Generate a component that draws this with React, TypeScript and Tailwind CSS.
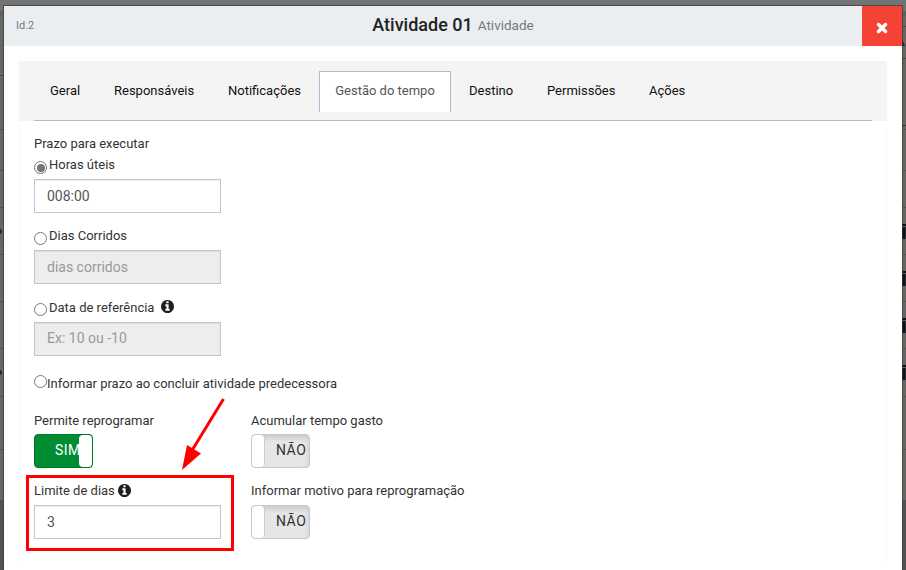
import React from "react";

const tabs = [
  { label: "Geral", cls: "ml-[15px] w-[65px]" },
  { label: "Responsáveis", cls: "w-[114px]" },
  { label: "Notificações", cls: "w-[91px]" },
  { label: "Gestão do tempo", active: true, cls: "w-[132px]" },
  { label: "Destino", cls: "ml-[2px] w-[76px]" },
  { label: "Permissões", cls: "ml-[2px] w-[100px]" },
  { label: "Ações", cls: "ml-[2px] w-[68px]" },
];

const rules = [129, 170, 207, 254, 301, 348, 396, 449];
const actions = [224, 271, 318, 365];

function Info({ className }: { className: string }) {
  return (
    <svg viewBox="0 0 1536 1536" className={className} fill="#1f1f1f">
      <path d="M1024 1248v-160q0-14-9-23t-23-9h-96V544q0-14-9-23t-23-9H544q-14 0-23 9t-9 23v160q0 14 9 23t23 9h96v320h-96q-14 0-23 9t-9 23v160q0 14 9 23t23 9h448q14 0 23-9t9-23zM896 352V192q0-14-9-23t-23-9H672q-14 0-23 9t-9 23v160q0 14 9 23t23 9h192q14 0 23-9t9-23zM1536 768q0 209-103 385.500T1153.500 1433 768 1536 382.500 1433 103 1153.500 0 768 103 382.500 382.500 103 768 0t385.500 103T1433 382.500 1536 768z" />
    </svg>
  );
}

function Radio({ checked = false, className = "" }: { checked?: boolean; className?: string }) {
  return (
    <span className={`flex size-[13px] shrink-0 items-center justify-center rounded-full border border-[#767676] bg-white ${className}`}>
      {checked && <span className="size-[8px] rounded-full bg-[#767676]" />}
    </span>
  );
}

function Field({ value, disabled = false, className = "" }: { value: string; disabled?: boolean; className?: string }) {
  return (
    <div className={`flex h-[34px] w-[187px] items-center border border-[#c6c6c6] px-3 text-[14px] shadow-[inset_0_1px_1px_rgba(0,0,0,0.07)] ${disabled ? "bg-[#ededed] text-[#999]" : "bg-white text-[#555]"} ${className}`}>
      {value}
    </div>
  );
}

function Toggle({ on = false }: { on?: boolean }) {
  return on ? (
    <div className="flex h-[34px] w-[59px] items-center justify-between rounded border border-[#00752a] bg-[#008d31] pl-5 text-[14px] tracking-[0.5px] text-white">
      <span className="-mr-4 pb-[2px] whitespace-nowrap">SIM</span>
      <span className="relative h-[32px] w-[13px] shrink-0 rounded bg-white" />
    </div>
  ) : (
    <div className="flex h-[34px] w-[59px] items-center overflow-hidden rounded border border-[#c8c8c8] bg-[#e6e6e6] text-[14px] tracking-[0.5px] text-[#333] shadow-[inset_0_3px_5px_rgba(0,0,0,0.125)]">
      <span className="h-[32px] w-[13px] shrink-0 rounded border-r border-[#ccc] bg-white" />
      <span className="ml-[11px] pb-[2px]">NÃO</span>
    </div>
  );
}

function Backdrop() {
  return (
    <div className="absolute inset-0 overflow-hidden bg-[#686663]">
      <div className="absolute inset-x-0 top-0 h-[11px] bg-[#737373]" />
      <div className="absolute inset-x-0 top-[11px] h-[5px] bg-[#5f5f5f]" />
      <div className="absolute inset-x-0 top-[500px] bottom-0 bg-[#535250]" />
      <div className="absolute top-[75px] left-0 h-px w-1 bg-[#444]" />
      <div className="absolute top-[26px] right-0 h-px w-1 bg-[#484848]" />
      <div className="absolute top-[58px] right-0 h-px w-1 bg-[#444]" />
      <div className="absolute top-[125px] right-0 h-px w-1 bg-[#333]" />
      {rules.map((y) => (
        <div key={y} className="absolute inset-x-0 h-px bg-[#51504e]" style={{ top: y }} />
      ))}
      <div className="absolute top-[229px] -left-[3px] size-[5px] rounded-full bg-[#24204a]" />
      <div className="absolute top-[370px] -left-[3px] size-[5px] rounded-full bg-[#24204a]" />
      <svg className="absolute top-[39px] left-[902px] h-[7px] w-1" viewBox="0 0 4 7"><path d="M0 0 3 7H1L0 5Z" fill="#17242c" /></svg>
      {actions.map((y) => (
        <div key={y} className="absolute right-0 flex w-1 flex-col gap-px" style={{ top: y }}>
          <div className="h-[2px] bg-[#111]" />
          <div className="flex h-[12px]">
            <div className="w-[3px] bg-[#111]" />
            <div className="w-px bg-[#263340]" />
          </div>
        </div>
      ))}
    </div>
  );
}

export default function App() {
  return (
    <div className="relative flex h-[570px] w-[906px] overflow-hidden pt-[6px] pl-1 font-[Roboto,sans-serif] text-[13px] text-[#333]">
      <Backdrop />
      <main className="relative h-[564px] w-[898px] bg-white shadow-[0_0_0_1px_rgba(60,60,60,0.7)]">
        <header className="flex h-10 bg-[#eaeef1]">
          <span className="w-[120px] pt-[12px] pl-3 text-[11px] leading-[16px] text-[#777]">Id.2</span>
          <h1 className="flex flex-1 justify-center pt-[6px] text-[18px] leading-[26px] font-medium whitespace-pre text-[#222]">
            <span>Atividade 01</span>
            <small className="ml-[5px] text-[13.500px] font-normal text-[#777]">Atividade</small>
          </h1>
          <span className="w-[80px]" />
          <button className="flex w-10 items-center justify-center bg-[#f44336] pt-[3px]">
            <svg viewBox="0 0 12 12" className="size-3"><path d="M2.500 2.500 9.500 9.500M9.500 2.500 2.500 9.500" stroke="white" strokeWidth="3.500" strokeLinecap="round" /></svg>
          </button>
        </header>
        <div className="px-[15px] pt-[15px]">
          <nav className="h-[60px] bg-[#f4f4f4] px-[15px] pt-[10px]">
            <div className="-mt-px flex h-[51px] border-b border-[#a9bfd1] pt-px">
              {tabs.map((t, i) => (
                <div key={t.label} className={`flex h-[41px] shrink-0 items-center whitespace-nowrap ${t.active ? "justify-center border border-b-0 border-[#a9bfd1] bg-white pb-[3px] text-[#555]" : "pb-[2px] text-[#111]"} ${i > 3 ? "pl-4" : ""} ${i === 0 ? "pl-px" : ""} ${t.cls}`}>
                  {t.label}
                </div>
              ))}
            </div>
          </nav>
          <section className="h-[443px] border-x border-[#fafafa] px-[14px] pt-[13px] leading-5">
            <div className="h-[21px]">Prazo para executar</div>
            <div className="flex h-[24px]"><Radio checked className="mt-[6px]" /><span className="ml-[2px]">Horas úteis</span></div>
            <Field value="008:00" />
            <div className="flex h-[37px] pt-[13px]"><Radio className="mt-[6px]" /><span className="ml-[2px]">Dias Corridos</span></div>
            <Field value="dias corridos" disabled />
            <div className="flex h-[38px] pt-[14px]"><Radio className="mt-[5px]" /><span className="ml-[2px]">Data de referência</span><Info className="mt-[2px] ml-[7px] size-[13px]" /></div>
            <Field value="Ex: 10 ou -10" disabled className="pb-[2px]" />
            <div className="flex h-[55px] pt-[18px]"><Radio className="mt-px" /><span>Informar prazo ao concluir atividade predecessora</span></div>
            <div className="grid grid-cols-[217px_1fr]">
              <div className="h-[70px]"><div className="h-[23px]">Permite reprogramar</div><Toggle on /></div>
              <div className="h-[70px]"><div className="h-[23px]">Acumular tempo gasto</div><Toggle /></div>
              <div><div className="flex h-[24px]">Limite de dias<Info className="mt-[3px] ml-[3px] size-[13px]" /></div><Field value="3" /></div>
              <div><div className="h-[24px]">Informar motivo para reprogramação</div><Toggle /></div>
            </div>
          </section>
        </div>
      </main>
      <div className="absolute top-[474.500px] left-[25.500px] h-[76px] w-[208px] border-[3px] border-[#ff0000]" />
      <svg className="pointer-events-none absolute inset-0 size-full" viewBox="0 0 906 570">
        <path d="M223.500 399 191 452" stroke="#ff0000" strokeWidth="3" />
        <path d="M182 470 187 445 201 453.500Z" fill="#ff0000" />
      </svg>
    </div>
  );
}
